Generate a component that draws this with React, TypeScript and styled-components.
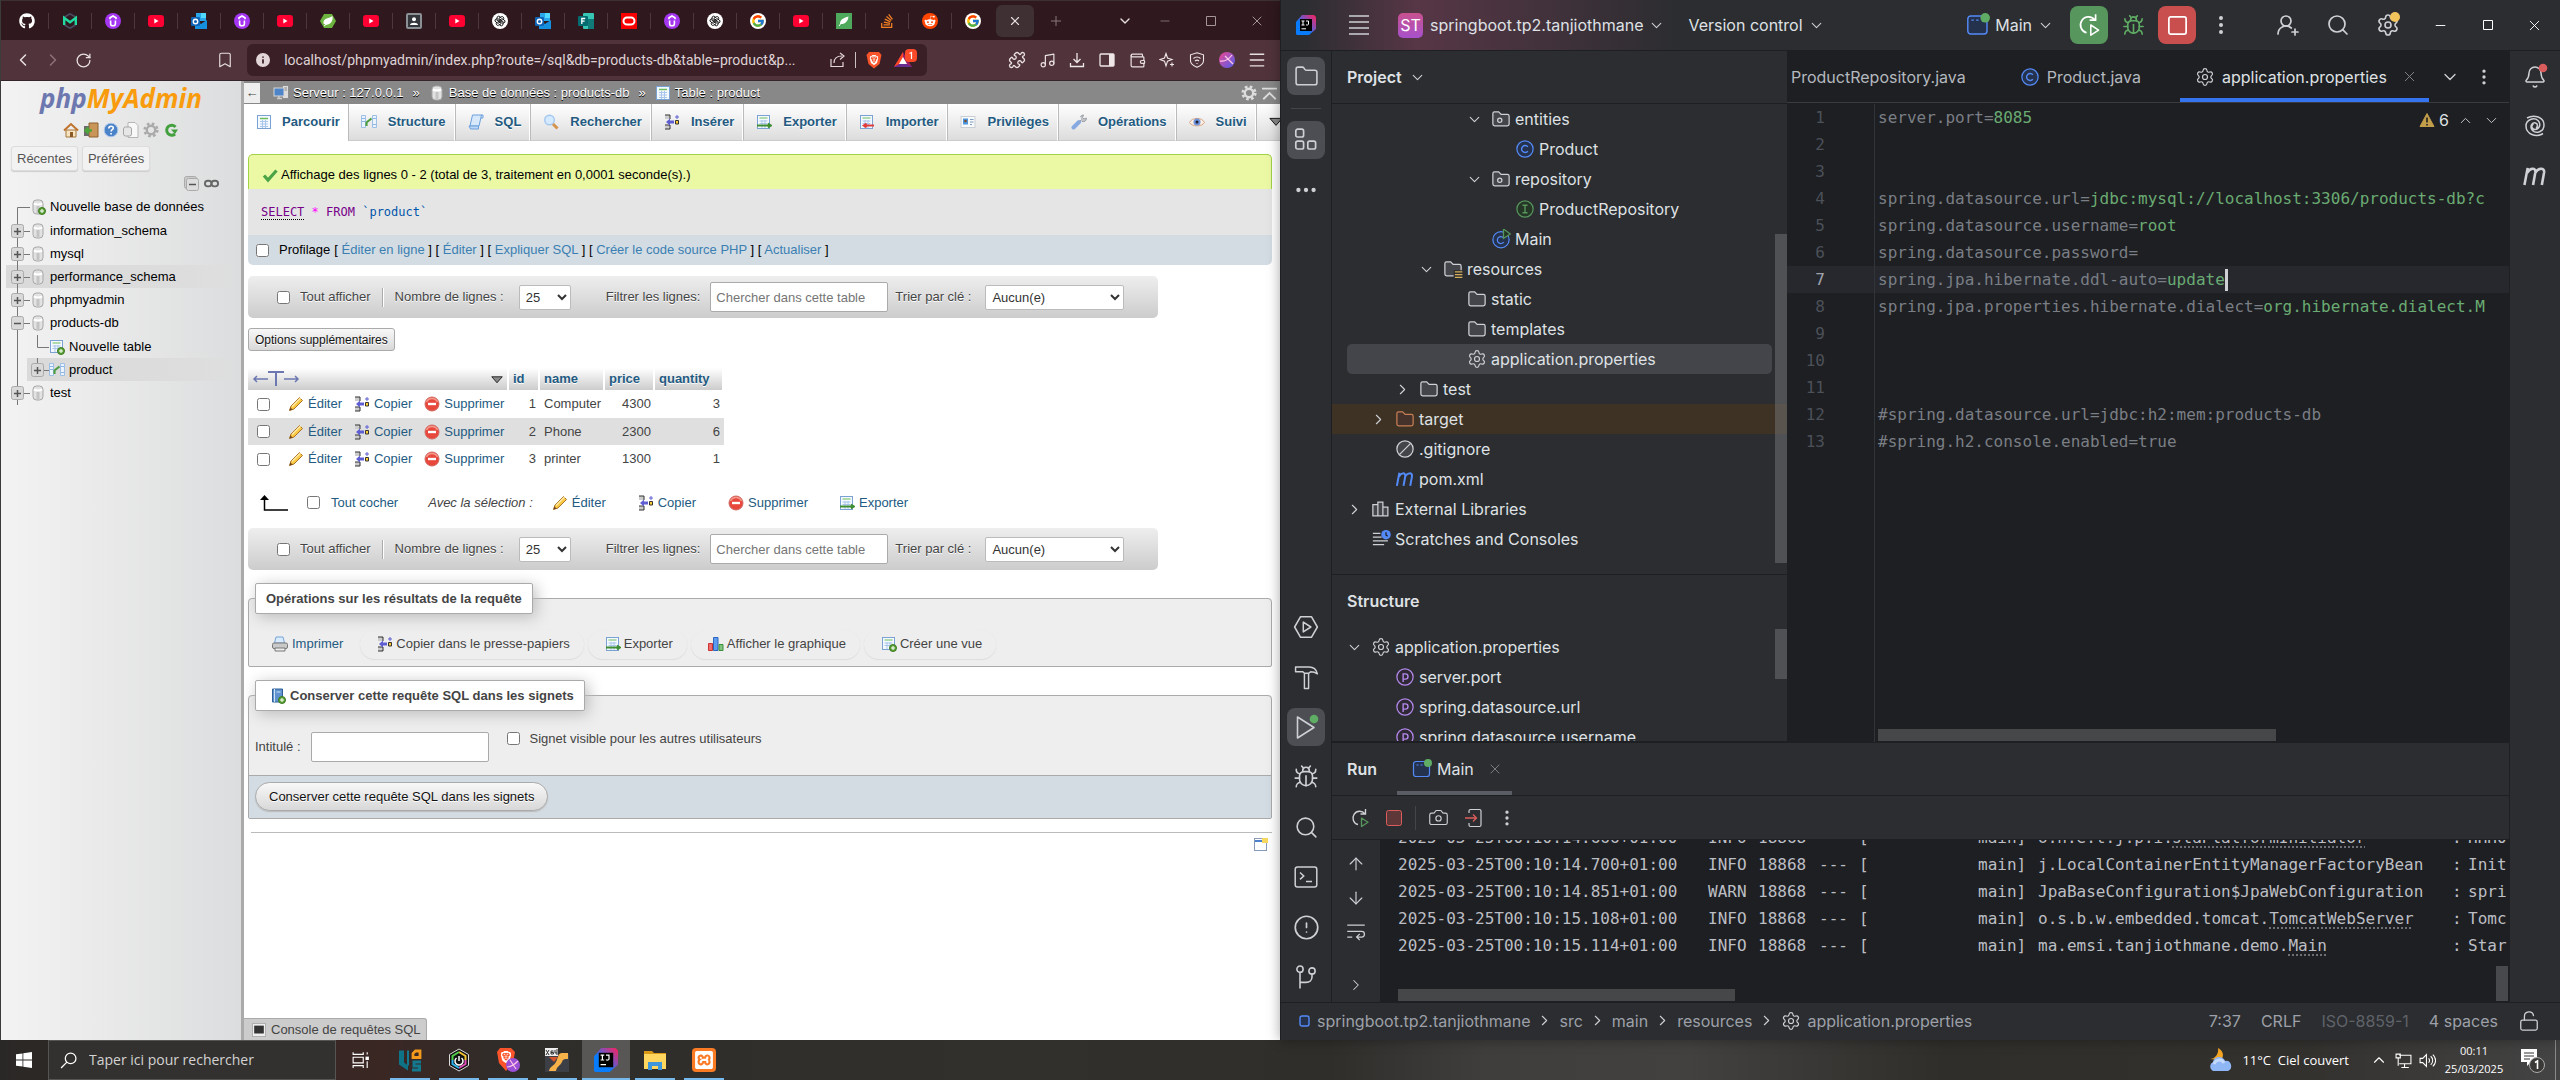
import React from "react";
import styled, { createGlobalStyle, css } from "styled-components";
import {
  ArrowDown, ArrowUp, Bell, Bookmark, Bug, Camera, ChevronDown, ChevronLeft, ChevronRight, ChevronUp,
  CircleAlert, EllipsisVertical, Ellipsis, Folder, LockOpen, Menu, Minus, Music, Plus, Puzzle,
  RotateCw, Search, Settings, Square, UserRoundPlus, Wallet, X,
} from "lucide-react";
import { FaGithub, FaRedditAlien, FaStackOverflow } from "react-icons/fa";
import { FcGoogle } from "react-icons/fc";
import { SiBrave, SiXampp } from "react-icons/si";
import { TbBrandOpenai } from "react-icons/tb";

const Global = createGlobalStyle`
  * { box-sizing: border-box; }
  body { margin: 0; overflow: hidden; }
  button, input, select { font: inherit; color: inherit; }
  button { background: none; border: 0; padding: 0; margin: 0; }
  ul { list-style: none; margin: 0; padding: 0; }
  a { text-decoration: none; color: inherit; }
  svg { flex: none; display: block; }
`;

const ARIAL = '"Liberation Sans", Arial, sans-serif';
const INTER = 'Inter, sans-serif';
const MONO = '"DejaVu Sans Mono", monospace';
const SEGOE = '"Open Sans", "Noto Sans", sans-serif';

const Desktop = styled.div`
  display: flex;
  flex-direction: column;
  height: 100vh;
  background: #2d2b29;
`;
const Windows = styled.div`
  display: grid;
  grid-template-columns: minmax(0, 1fr) minmax(0, 1fr);
  flex: 1;
  min-height: 0;
`;

/* ---------- small drawings ---------- */

const Art = ({ w = 16, h, v = "0 0 16 16", children }: { w?: number; h?: number; v?: string; children: React.ReactNode }) => (
  <svg width={w} height={h ?? w} viewBox={v} fill="none" aria-hidden="true">{children}</svg>
);

const Udemy = () => (
  <Art><circle cx="8" cy="8" r="8" fill="#a435f0" /><path d="M5 6.2V4.8L8 3l3 1.8v1.4M5.6 7.4v3a2.4 2.4 0 0 0 4.8 0v-3" stroke="#fff" strokeWidth="1.6" /></Art>
);
const Mail = () => (
  <Art><path d="M2.5 4L8 .8 13.5 4M2.5 12L8 15.2 13.5 12" stroke="#4b4d63" strokeWidth="1.5" /><path d="M2.2 12V4.800L8 9.200l5.800-4.400V12" stroke="#22d9a0" strokeWidth="2.4" /></Art>
);
const Outlook = () => (
  <Art><path d="M5 0h10v8H5z" fill="#28a8ea" /><path d="M10 0h5v5h-5z" fill="#50d9ff" /><path d="M4 7l6 4 6-4v9H4z" fill="#1490df" /><rect y="4" width="9" height="9" rx="1" fill="#0f64b5" /><circle cx="4.5" cy="8.5" r="2.2" stroke="#fff" strokeWidth="1.4" /></Art>
);
const Tube = () => (
  <Art><rect y="2" width="16" height="12" rx="3" fill="#ff0033" /><path d="M6.3 5.5v5L10.5 8z" fill="#fff" /></Art>
);
const Leaf = () => (
  <Art><path d="M4 1h8l4 7-4 7H4L0 8z" fill="#6db33f" /><path d="M3.5 10.5C3 5 8 6 12.5 3c1 6-3 9.500-7.500 8.500" fill="#fff" /><path d="M4 13l5-4" stroke="#fff" /></Art>
);
const Contact = () => (
  <Art><rect x="1" y="1" width="14" height="14" rx="1" stroke="#8b9095" strokeWidth="2" fill="#33363b" /><circle cx="8" cy="6.2" r="2" fill="#fff" /><path d="M4 12c0-3 8-3 8 0z" fill="#fff" /></Art>
);
const Forms = () => (
  <Art><rect x="5" width="11" height="16" rx="1" fill="#37c6b4" /><rect x="10" y="6" width="6" height="10" fill="#0f7a78" /><rect y="3" width="10" height="10" rx="1" fill="#036c70" /><path d="M3.8 11V5.500h3.400M3.8 8.200h2.800" stroke="#fff" strokeWidth="1.3" /></Art>
);
const Oracle = () => (
  <Art><rect width="16" height="16" fill="#f80000" /><rect x="2.5" y="4.5" width="11" height="7" rx="3.5" stroke="#fff" strokeWidth="2" /></Art>
);
const Gpt = () => (
  <Art><circle cx="8" cy="8" r="8" fill="#fff" /><TbBrandOpenai x={2} y={2} size={12} color="#111" /></Art>
);
const Google = () => (
  <Art><circle cx="8" cy="8" r="8" fill="#fff" /><FcGoogle x={1} y={1} size={14} /></Art>
);
const Thyme = () => (
  <Art><rect width="16" height="16" fill="#4fa95c" /><path d="M4 11C4 6 8 5 12.5 3.500 12 8 9.500 11.500 4 11z" fill="#fff" /><path d="M3 13l3-4" stroke="#fff" /></Art>
);
const Reddit = () => (
  <Art><circle cx="8" cy="8" r="8" fill="#ff4500" /><FaRedditAlien x={2} y={2} size={12} color="#fff" /></Art>
);

const Idea = ({ s }: { s: number }) => (
  <Art w={s} v="0 0 20 20">
    <defs><linearGradient id={`ij${s}`} x1="1" y1="0" x2="0" y2="1"><stop offset="0" stopColor="#ff1f5a" /><stop offset=".45" stopColor="#6b57c9" /><stop offset=".6" stopColor="#087cfa" /></linearGradient></defs>
    <path d="M0 7l6-7h12l2 2v12l-7 6H1l-1-1z" fill={`url(#ij${s})`} />
    <rect x="4" y="4" width="12" height="12" fill="#000" />
    <path d="M5.500 6h3M7 6v4M5.500 10h3M10 6h2.500v3.200c0 .8-1.600 1.200-2.500.5M5.500 13.800h4.500" stroke="#fff" strokeWidth="1" />
  </Art>
);

/* phpMyAdmin icon set */
const PTable = () => (
  <Art><rect x="1.5" y="1.5" width="13" height="13" fill="#f4f9ff" stroke="#7aa3d4" /><path d="M4 4.500h8" stroke="#6cbd5b" strokeWidth="1.5" /><path d="M4 7.500h8M4 10h8M4 12.500h8M6.500 6v8M9.500 6v8" stroke="#a9c6ea" /></Art>
);
const PStruct = () => (
  <Art><path d="M.5 1.500h4v12h-4zM11.500 1.500h4v12h-4z" fill="#eaf3ff" stroke="#9dbfe6" /><path d="M1 4.500h3M1 7.500h3M12 4.500h3M12 10.500h3" stroke="#8fb6e3" /><path d="M5.500 12V8.500l5-4" stroke="#4f9d44" strokeWidth="2.2" /></Art>
);
const PSql = () => (
  <Art><path d="M4.500 1h9l-2.500 11H2z" fill="#d7e8fb" stroke="#6a9fdc" /><path d="M1 12h9.500v3H2.500z" fill="#bcd6f5" stroke="#6a9fdc" /><path d="M13 1h2v3h-2" stroke="#6a9fdc" /></Art>
);
const PSearch = () => (
  <Art><circle cx="6.5" cy="6" r="4.8" fill="#d5e9ff" stroke="#a3c8f0" strokeWidth="1.4" /><path d="M10 10l4.500 4.500" stroke="#d3924e" strokeWidth="3" /></Art>
);
const PInsert = () => (
  <Art><path d="M1 1h5v4H1zM1 11h5v4H1z" fill="#ccc" /><path d="M1 1h5v4M1 11h5v4H1" stroke="#333" /><path d="M2 8l4-3.500v2h4v3H6v2z" fill="#5f5fd3" /><path d="M11.500 6.500h3v3.500h-3z" fill="#fc3" stroke="#333" /><path d="M13 1v4M11 3h4" stroke="#5f5fd3" /></Art>
);
const PExport = ({ c = "#3f8e34", flip = false }: { c?: string; flip?: boolean }) => (
  <Art><rect x="1.5" y="1.5" width="12" height="13" fill="#f4f9ff" stroke="#7aa3d4" /><path d="M3.500 4h8" stroke="#6cbd5b" /><path d="M3.500 7h8M3.500 9.500h8M6 6v8M9 6v8" stroke="#a9c6ea" />{flip ? <path d="M15 11.500H5M7.500 9.500l-3 2 3 2" stroke={c} strokeWidth="1.8" /> : <path d="M1 11.500h13M12 9.500l3 2-3 2" stroke={c} strokeWidth="1.8" />}</Art>
);
const PPriv = () => (
  <Art><rect x="1" y="2.5" width="14" height="11" fill="#f7f9fb" stroke="#c9ced3" /><rect x="3" y="4.5" width="5" height="6" fill="#4d96df" /><circle cx="5.5" cy="7" r="1.3" fill="#7a4b25" /><path d="M10 5.500h3.500M10 8h3.500M10 10.500h2" stroke="#7d9cc0" /></Art>
);
const PWrench = () => (
  <Art><path d="M2.500 13.500L8 8" stroke="#86a9e2" strokeWidth="4" strokeLinecap="round" /><path d="M8 8l2.500-2.500M9.500 3a3 3 0 0 1 3-2l-1 2.500 1.500 1.500 2.300-1a3 3 0 0 1-4.800 3" fill="#c3c7cc" stroke="#9a9fa5" /></Art>
);
const PEye = () => (
  <Art><path d="M.5 8.500C3 3 13 3 15.500 8.500 13 13 3 13 .5 8.500z" fill="#fbeee4" stroke="#d7a483" /><circle cx="8" cy="8" r="3.5" fill="#6d94dc" /><circle cx="8" cy="8" r="1.5" fill="#223" /></Art>
);
const PPencil = () => (
  <Art><path d="M1.500 14.500L3 10l8.500-8.500 3 3L6 13z" fill="#f9c944" stroke="#a9702a" /><path d="M4 10.500L12.500 2" stroke="#fdeaa9" strokeWidth="1.4" /><path d="M1.500 14.500l1-3 2 2z" fill="#6b4218" /></Art>
);
const PDelete = () => (
  <Art><circle cx="8" cy="8" r="7" fill="#e8483b" stroke="#cf6a62" /><path d="M2.500 6a6 6 0 0 1 11 0" stroke="#f59a8f" strokeWidth="1.5" /><path d="M4 8h8" stroke="#fff" strokeWidth="2.4" /></Art>
);
const PDb = ({ plus = false }: { plus?: boolean }) => (
  <Art><rect x="3" y="1" width="10" height="14" rx="3.5" fill="#e2e2e2" stroke="#a6a6a6" /><path d="M4 4.500c2 1 6 1 8 0" stroke="#fff" strokeWidth="2" /><path d="M8 7v7" stroke="#c4c4c4" strokeWidth="3" />{plus && <><circle cx="12" cy="12" r="3.5" fill="#5ca138" stroke="#3c7a20" /><path d="M12 10v4M10 12h4" stroke="#fff" /></>}</Art>
);
const PNewTable = () => (
  <Art><rect x="1.5" y="1.5" width="12" height="12" fill="#f4f9ff" stroke="#7aa3d4" /><path d="M3.500 4h8" stroke="#6cbd5b" /><path d="M3.500 7h8M3.500 9.500h8M6 6v7M9 6v7" stroke="#a9c6ea" /><circle cx="12" cy="12" r="3.5" fill="#5ca138" stroke="#3c7a20" /><path d="M12 10v4M10 12h4" stroke="#fff" /></Art>
);
const PServer = () => (
  <Art><rect x="9.5" y=".5" width="6" height="13" fill="#dcdcdc" stroke="#8c8c8c" /><path d="M11 3h3M11 5h3" stroke="#888" /><rect x="1" y="3" width="10" height="8" fill="#4e84c8" stroke="#d6d6d6" /><path d="M4 13.500h5M6 11v2" stroke="#ccc" strokeWidth="1.5" /></Art>
);
const PGear = ({ c = "#aaa", s = 16 }: { c?: string; s?: number }) => (
  <Art w={s}><circle cx="8" cy="8" r="6.3" stroke={c} strokeWidth="2.6" strokeDasharray="2.6 2.35" /><circle cx="8" cy="8" r="4.2" stroke={c} strokeWidth="2.4" /></Art>
);
const PCheck = () => (
  <Art><path d="M2 8.500L6 13l8.500-9.500" stroke="#4ba446" strokeWidth="3.2" /></Art>
);
const PPrint = () => (
  <Art><path d="M4 1h7l1.500 6h-10z" fill="#d9ebff" stroke="#79a5d8" /><rect x=".5" y="7" width="15" height="5.5" rx="1.5" fill="#c9c9c9" stroke="#777" /><path d="M3 12h10v3H3z" fill="#eee" stroke="#777" /></Art>
);
const PChart = () => (
  <Art><path d="M.5 7.500h4v7h-4z" fill="#ef6a6a" stroke="#c33" /><path d="M5.500 1.500h4.500v13H5.500z" fill="#5d9cf0" stroke="#2a67bd" /><path d="M11 8.500h4v6h-4z" fill="#7fc47f" stroke="#3c8f3c" /></Art>
);
const PBook = () => (
  <Art><path d="M2.500 1h10v13h-10z" fill="#5f93cf" stroke="#2e6097" /><path d="M4.500 1v13M6.500 4h4" stroke="#cfe2f7" /><circle cx="12" cy="12" r="3.5" fill="#5ca138" stroke="#3c7a20" /><path d="M12 10v4M10 12h4" stroke="#fff" /></Art>
);
const PHome = () => (
  <Art><path d="M3 8h10v7H3z" fill="#f7e3c0" stroke="#a5773b" /><path d="M1 8.500L8 2l7 6.500" stroke="#c0722b" strokeWidth="2" /><path d="M7 10h3v5H7z" fill="#8a5a26" /></Art>
);
const PExit = () => (
  <Art><path d="M6 1h9v14H6z" fill="#c99559" stroke="#8d6230" /><path d="M1 4h5v10H1z" fill="#6b6b6b" /><path d="M9 8.500H3M5.500 5.500l-3 3 3 3" stroke="#4ea53c" strokeWidth="2.4" /></Art>
);
const PHelp = () => (
  <Art><circle cx="8" cy="8" r="6.8" fill="#4b83c9" stroke="#a9c6ea" /><path d="M5.800 6.500c0-3 4.500-3 4.500-.4 0 1.600-2.200 1.700-2.200 3.400M8.100 11v1.500" stroke="#fff" strokeWidth="1.6" /></Art>
);
const PDocs = () => (
  <Art><path d="M5 .5h7l3 3v12H5z" fill="#f8f8f8" stroke="#b5b5b5" /><rect x=".5" y="5" width="8" height="9" rx="2" fill="#e6e6e6" stroke="#a6a6a6" /></Art>
);
const PReload = () => (
  <Art><path d="M12.500 5A5 5 0 1 0 12 12" stroke="#43a03f" strokeWidth="3" /><path d="M8 7.500h7L12 12z" fill="#43a03f" /></Art>
);

/* ---------- browser ---------- */

const Browser = styled.section`
  display: flex;
  flex-direction: column;
  min-width: 0;
  border-left: 1px solid #3b3b3b;
  background: #fff;
  font: 13px/16px ${ARIAL};
  color: #444;
  overflow: hidden;
`;
const TabStrip = styled.div`
  display: flex;
  align-items: center;
  flex: none;
  height: 40px;
  padding-left: 5px;
  background: #2f191f;
  border-top: 1px solid #3c3034;
  color: #e9e0e2;
`;
const FavTab = styled.button`
  display: flex;
  justify-content: center;
  align-items: center;
  width: 43px;
  height: 16px;
  border-right: 1px solid #4c383d;
  &:nth-child(23) { border-right-color: transparent; }
`;
const ActiveTab = styled.button`
  display: flex;
  align-items: center;
  justify-content: center;
  width: 38px;
  height: 32px;
  margin-left: 1px;
  border-radius: 6px;
  background: #3f3034;
`;
const StripButton = styled.button<{ $w: number; $c?: string }>`
  display: flex;
  align-items: center;
  justify-content: center;
  width: ${(p) => p.$w}px;
  height: 32px;
  color: ${(p) => p.$c ?? "#e9e0e2"};
`;
const Spacer = styled.span<{ $n?: number }>`flex: ${(p) => p.$n ?? 1};`;
const NavBar = styled.div`
  display: flex;
  align-items: center;
  flex: none;
  height: 41px;
  background: #51343b;
  border-bottom: 1px solid #35242a;
  padding: 0 8px 0 7px;
  color: #efe6e8;
`;
const UrlBox = styled.label`
  display: flex;
  align-items: center;
  gap: 14px;
  width: 680px;
  height: 32px;
  padding: 0 7px 0 9px;
  border-radius: 6px;
  background: #3a1f26;
  margin-left: 7px;
`;
const Url = styled.input`
  flex: 1;
  min-width: 0;
  border: 0;
  background: none;
  color: #ded2d5;
  font: 14px/20px Roboto, sans-serif;
  padding: 0;
  outline: 0;
`;
const UrlIcons = styled.span`
  display: flex;
  align-items: center;
  gap: 9px;
`;
const UrlRule = styled.i`
  width: 1px;
  height: 16px;
  background: #cabfc2;
`;

const Page = styled.div`
  display: flex;
  flex: 1;
  min-height: 0;
`;
const Side = styled.nav`
  width: 243px;
  flex: none;
  border-right: 3px solid #aaa;
  background: linear-gradient(90deg, #f3f3f3, #dcddde);
  color: #000;
`;
const Logo = styled.div`
  font: italic 700 26px/34px ${SEGOE};
  text-align: center;
  color: #6c78af;
  height: 39px;
  span { color: #f89c0e; }
`;
const SideIcons = styled.div`
  display: flex;
  justify-content: center;
  gap: 4px;
  height: 20px;
  align-items: center;
`;
const SideButtons = styled.div`
  display: flex;
  gap: 4px;
  padding: 6px 10px 0;
`;
const SideButton = styled.button`
  height: 25px;
  padding: 0 5px;
  border: 1px solid #ddd;
  border-radius: 3px;
  background: #f2f2f2;
  color: #555;
  box-shadow: 0 1px 1px #ccc;
`;
const SideTools = styled.div`
  display: flex;
  justify-content: flex-end;
  align-items: center;
  gap: 5px;
  height: 24px;
  padding-right: 22px;
`;
const SideRow = styled.li<{ $hot?: boolean; $h?: number }>`
  display: flex;
  align-items: center;
  height: ${(p) => p.$h ?? 23}px;
  margin-left: 5px;
  white-space: nowrap;
  & > div {
    display: flex;
    align-items: center;
    flex: 1;
    height: 100%;
    background: ${(p) => (p.$hot ? "linear-gradient(90deg, #dadada, #dddddd 80%, transparent)" : "none")};
  }
  a { margin-left: 4px; }
`;
const Joint = ({ kind, inner = false }: { kind: "new" | "plus" | "minus"; inner?: boolean }) => (
  <svg width={inner ? 22 : 24} height="24" viewBox={inner ? "1 0 22 24" : "0 0 24 24"} fill="none" stroke="#777">
    {kind === "new" ? <path d={inner ? "M11.5 0V12.500H24" : "M11.5 24V12.500H24"} /> : (
      <>
        {inner ? <path d="M11.5 0v12" /> : <path d="M11.5 0v24" />}
        <path d="M17 12.500h7" />
        <rect x="5.500" y="5.500" width="12" height="13" rx="2" fill="#d9d9d9" stroke="#aaa" />
        <path d={kind === "plus" ? "M8 12.500h7M11.500 9v7" : "M8 12.500h7"} stroke="#555" strokeWidth="1.500" />
      </>
    )}
  </svg>
);
const Trunk = () => <svg width="21" height="24" fill="none" stroke="#777"><path d="M11.500 0v24" /></svg>;

const Main = styled.main`
  display: flex;
  flex-direction: column;
  flex: 1;
  min-width: 0;
`;
const Crumbs = styled.div`
  display: flex;
  align-items: center;
  flex: none;
  height: 23px;
  padding-right: 3px;
  background: #888;
  color: #fff;
  text-shadow: 0 1px 0 #000;
  white-space: nowrap;
`;
const BackBox = styled.button`
  width: 16px;
  height: 20px;
  margin-right: 13px;
  background: #eee;
  color: #444;
  text-shadow: none;
`;
const Crumb = styled.a`
  display: flex;
  align-items: center;
  gap: 4px;
`;
const Raquo = styled.span`padding: 0 9px;`;
const Tabs = styled.div`
  display: flex;
  flex: none;
  height: 37px;
  overflow: hidden;
`;
const Tab = styled.a<{ $on?: boolean }>`
  display: flex;
  flex: none;
  gap: 11px;
  padding: 10px 8px 0 12px;
  font-weight: 700;
  color: #235a81;
  text-shadow: 0 1px 0 #fff;
  border-right: 1px solid #fff;
  ${(p) => p.$on
    ? css`background: #fff; padding-right: 7px; gap: 10px;`
    : css`background: linear-gradient(#fff, #dcdcdc); border-left: 1px solid #bbb; border-bottom: 1px solid #ccc;`}
`;
const Body = styled.div`
  flex: 1;
  padding: 13px 8px 0 4px;
  min-height: 0;
`;
const Notice = styled.div`
  display: flex;
  align-items: center;
  gap: 3px;
  height: 35px;
  padding: 5px 13px 0;
  border: 1px solid #a2d246;
  border-bottom: 0;
  border-radius: 5px 5px 0 0;
  background: #ebf8a4;
  color: #000;
`;
const SqlText = styled.div`
  height: 46px;
  padding: 14px 13px;
  background: #e5e5e5;
  font: 12px/18px ${MONO};
  color: #770088;
  i { font-style: normal; color: #ff00ff; }
  b { font-weight: 400; color: #0055aa; }
  u { text-decoration: none; border-bottom: 1px dotted #000; }
`;
const ProfileBar = styled.div`
  display: flex;
  align-items: center;
  gap: 4px;
  height: 30px;
  padding-left: 8px;
  border-radius: 0 0 5px 5px;
  background: #d3dce3;
  color: #000;
  label { display: flex; gap: 10px; align-items: center; }
  a { color: #3b7fb2; }
`;
const Check = styled.input.attrs({ type: "checkbox" })`
  width: 13px;
  height: 13px;
  margin: 0;
`;
const OptionBar = styled.form<{ $top: number }>`
  display: flex;
  align-items: center;
  width: 910px;
  height: 42px;
  margin-top: ${(p) => p.$top}px;
  padding-left: 29px;
  border-radius: 5px;
  background: linear-gradient(#eee, #ccc);
  text-shadow: 0 1px 0 #fff;
  white-space: nowrap;
  label { display: flex; align-items: center; gap: 10px; }
`;
const BarRule = styled.i`
  width: 2px;
  height: 19px;
  margin: 0 11px;
  border-left: 1px solid #aaa;
  background: #fff;
`;
const PickRows = styled.label`&& { gap: 15px; margin-right: 35px; }`;
const PickKey = styled.label`&& { gap: 14px; margin-left: 7px; }`;
const Pick = styled.select<{ $w: number }>`
  width: ${(p) => p.$w}px;
  height: 25px;
  padding: 0 2px;
  border: 1px solid #bbb;
  border-radius: 2px;
  background: #fff;
  color: #333;
`;
const Field = styled.input`
  width: 178px;
  height: 30px;
  padding: 0 5px;
  border: 1px solid #aaa;
  border-radius: 2px;
  background: #fff;
`;
const GreyButton = styled.button<{ $round?: boolean }>`
  border: 1px solid #aaa;
  background: linear-gradient(#f8f8f8, #d8d8d8);
  color: #111;
  text-shadow: 0 1px 0 #fff;
  ${(p) => p.$round
    ? css`height: 29px; padding: 0 13px; border-radius: 15px; box-shadow: 0 1px 1px #bbb;`
    : css`display: block; height: 23px; margin-top: 10px; padding: 0 6px; border-radius: 3px; font-size: 12px;`}
`;
const Grid = styled.table`
  margin-top: 17px;
  border-collapse: separate;
  border-spacing: 0;
  table-layout: fixed;
  width: 476px;
  th, td { padding: 0 4px; text-align: left; white-space: nowrap; }
  th {
    height: 22px;
    border-right: 2px solid #fff;
    background: linear-gradient(#fff, #ccc);
    color: #235a81;
    text-shadow: 0 1px 0 #fff;
  }
  td.num { text-align: right; }
  tbody tr { height: 28px; }
  tbody tr:nth-child(even) { height: 27px; background: #dfdfdf; }
`;
const HeadTools = styled.div`
  display: flex;
  align-items: center;
  justify-content: space-between;
`;
const Acts = styled.div`
  display: flex;
  align-items: center;
  padding-left: 5px;
`;
const Act = styled.a<{ $ml: number }>`
  display: flex;
  align-items: center;
  gap: 4px;
  margin-left: ${(p) => p.$ml}px;
  color: #235a81;
`;
const CheckAll = styled.div`
  display: flex;
  align-items: center;
  height: 55px;
  padding: 4px 0 0 11px;
  label { display: flex; align-items: center; gap: 11px; margin: 0 30px 0 18px; color: #235a81; }
`;
const Box = styled.fieldset`
  margin: 13px 0 0;
  padding: 0;
  min-width: 0;
  border: 1px solid #aaa;
  border-radius: 4px 4px 2px 2px;
  background: #eee;
`;
const Legend = styled.legend`
  display: flex;
  align-items: center;
  gap: 4px;
  height: 31px;
  margin-left: 6px;
  padding: 0 10px;
  border: 1px solid #aaa;
  border-radius: 2px;
  background: #fff;
  box-shadow: 3px 3px 15px #bbb;
  font-weight: 700;
`;
const OpRow = styled.div`
  display: flex;
  align-items: center;
  height: 52px;
  padding: 8px 0 0 5px;
`;
const Pill = styled.button`
  display: flex;
  align-items: center;
  gap: 3px;
  height: 29px;
  margin-left: 4px;
  padding: 0 14px 0 17px;
  border-radius: 15px;
  box-shadow: 0 1px 1px #ddd, 0 0 1px #e4e4e4;
`;
const Print = styled.a`
  display: flex;
  align-items: center;
  gap: 4px;
  padding: 0 13px 0 18px;
  color: #235a81;
`;
const MarkRow = styled.div`
  display: flex;
  align-items: flex-start;
  height: 64px;
  padding: 21px 0 0 6px;
  label { display: flex; align-items: center; gap: 10px; }
  label:last-child { height: 13px; margin-left: 18px; }
`;
const MarkFoot = styled.div`
  height: 43px;
  padding: 6px;
  border-top: 1px solid #aaa;
  background: #d3dce3;
`;
const Rule = styled.hr`
  height: 1px;
  margin: 13px 0 0 3px;
  border: 0;
  background: #bbb;
`;
const FootIcon = styled.a`
  display: flex;
  justify-content: flex-end;
  padding: 3px 3px 0;
`;
const ConsoleTab = styled.button`
  display: flex;
  align-items: center;
  align-self: flex-start;
  gap: 5px;
  height: 22px;
  padding: 0 5px 0 8px;
  border: 1px solid #aaa;
  border-width: 1px 1px 0 0;
  border-radius: 0 3px 0 0;
  background: #ccc;
  color: #444;
`;

const favs = [
  <FaGithub size={16} color="#fff" />, <Mail />, <Udemy />, <Tube />, <Outlook />, <Udemy />, <Tube />, <Leaf />, <Tube />, <Contact />,
  <Tube />, <Gpt />, <Outlook />, <Forms />, <Oracle />, <Udemy />, <Gpt />, <Google />, <Tube />, <Thyme />,
  <FaStackOverflow size={16} color="#f48024" />, <Reddit />, <Google />,
];

const RowOptions = ({ id, top }: { id: string; top: number }) => (
  <OptionBar $top={top}>
    <label><Check name={`all-${id}`} />Tout afficher</label>
    <BarRule />
    <PickRows>Nombre de lignes :<Pick $w={52} defaultValue="25"><option>25</option><option>50</option></Pick></PickRows>
    <label>Filtrer les lignes:<Field placeholder="Chercher dans cette table" /></label>
    <PickKey>Trier par clé :<Pick $w={139}><option>Aucun(e)</option></Pick></PickKey>
  </OptionBar>
);

const records = [
  { id: 1, name: "Computer", price: 4300, quantity: 3 },
  { id: 2, name: "Phone", price: 2300, quantity: 6 },
  { id: 3, name: "printer", price: 1300, quantity: 1 },
];

const dbRows = ["information_schema", "mysql", "performance_schema", "phpmyadmin"];

const Sidebar = () => (
  <Side>
    <Logo>php<span>MyAdmin</span></Logo>
    <SideIcons><PHome /><PExit /><PHelp /><PDocs /><PGear /><PReload /></SideIcons>
    <SideButtons><SideButton>Récentes</SideButton><SideButton>Préférées</SideButton></SideButtons>
    <SideTools>
      <Art><rect x="1.5" y="1.5" width="12" height="12" rx="2" fill="#ccc" stroke="#aaa" /><rect x="3.5" y="3.5" width="12" height="12" rx="2" fill="#ddd" stroke="#aaa" /><path d="M6 9.500h7" stroke="#555" strokeWidth="1.5" /></Art>
      <Art w={15}><rect x="1" y="5" width="7" height="6" rx="3" stroke="#666" strokeWidth="2" /><rect x="8" y="5" width="7" height="6" rx="3" stroke="#666" strokeWidth="2" /></Art>
    </SideTools>
    <ul>
      <SideRow $h={24}><div><Joint kind="new" /><PDb plus /><a href="#new">Nouvelle base de données</a></div></SideRow>
      {dbRows.map((n) => (
        <SideRow key={n} $hot={n === "performance_schema"}><div><Joint kind="plus" /><PDb /><a href={`#${n}`}>{n}</a></div></SideRow>
      ))}
      <SideRow $h={24}><div><Joint kind="minus" /><PDb /><a href="#products-db">products-db</a></div></SideRow>
      <SideRow><Trunk /><div><Joint kind="new" inner /><PNewTable /><a href="#newtable">Nouvelle table</a></div></SideRow>
      <SideRow $hot><Trunk /><div><Joint kind="plus" inner /><PStruct /><a href="#product">product</a></div></SideRow>
      <SideRow $h={24}><div><Joint kind="plus" /><PDb /><a href="#test">test</a></div></SideRow>
    </ul>
  </Side>
);

const PmaMain = () => (
  <Main>
    <Crumbs>
      <BackBox>←</BackBox>
      <Crumb href="#server"><PServer />Serveur : 127.0.0.1</Crumb><Raquo>»</Raquo>
      <Crumb href="#db"><PDb />Base de données : products-db</Crumb><Raquo>»</Raquo>
      <Crumb href="#table"><PTable />Table : product</Crumb>
      <Spacer />
      <PGear c="#ddd" />
      <Art v="-6 0 16 16" w={20}><path d="M-2 4.500h12M-1 13l5-5 5 5" stroke="#ddd" strokeWidth="1.5" /></Art>
    </Crumbs>
    <Tabs>
      <Tab href="#browse" $on><PTable />Parcourir</Tab>
      <Tab href="#structure"><PStruct />Structure</Tab>
      <Tab href="#sql"><PSql />SQL</Tab>
      <Tab href="#search"><PSearch />Rechercher</Tab>
      <Tab href="#insert"><PInsert />Insérer</Tab>
      <Tab href="#export"><PExport />Exporter</Tab>
      <Tab href="#import"><PExport c="#e03c3c" flip />Importer</Tab>
      <Tab href="#priv"><PPriv />Privilèges</Tab>
      <Tab href="#ops"><PWrench />Opérations</Tab>
      <Tab href="#track"><PEye />Suivi</Tab>
      <Tab href="#more" aria-label="Plus"><Art w={14}><path d="M1 5h14L8 13z" fill="#888" stroke="#000" /></Art></Tab>
    </Tabs>
    <Body>
      <Notice><PCheck />Affichage des lignes 0 - 2 (total de 3, traitement en 0,0001 seconde(s).)</Notice>
      <SqlText><u>SELECT</u> <i>*</i> FROM <b>`product`</b></SqlText>
      <ProfileBar>
        <label><Check name="profiling" />Profilage</label>
        <span>[ <a href="#inline">Éditer en ligne</a> ] [ <a href="#edit">Éditer</a> ] [ <a href="#explain">Expliquer SQL</a> ] [ <a href="#php">Créer le code source PHP</a> ] [ <a href="#refresh">Actualiser</a> ]</span>
      </ProfileBar>
      <RowOptions id="top" top={11} />
      <GreyButton>Options supplémentaires</GreyButton>
      <Grid>
        <colgroup><col width="261" /><col width="31" /><col width="65" /><col width="50" /><col width="69" /></colgroup>
        <thead>
          <tr>
            <th>
              <HeadTools>
                <Art w={48} h={18} v="0 0 48 18"><path d="M2 9h14M32 9h14M5 6L2 9l3 3M43 6l3 3-3 3" stroke="#6c78af" strokeWidth="1.5" /><path d="M16 2h16M24 2v14" stroke="#6c78af" strokeWidth="2" /></Art>
                <Art w={12}><path d="M1 5h14L8 13z" fill="#888" stroke="#000" /></Art>
              </HeadTools>
            </th>
            <th>id</th><th>name</th><th>price</th><th>quantity</th>
          </tr>
        </thead>
        <tbody>
          {records.map((r) => (
            <tr key={r.id}>
              <td>
                <Acts>
                  <Check aria-label={`Ligne ${r.id}`} />
                  <Act href="#edit" $ml={18}><PPencil />Éditer</Act>
                  <Act href="#copy" $ml={12}><PInsert />Copier</Act>
                  <Act href="#drop" $ml={12}><PDelete />Supprimer</Act>
                </Acts>
              </td>
              <td className="num">{r.id}</td><td>{r.name}</td><td className="num">{r.price}</td><td className="num">{r.quantity}</td>
            </tr>
          ))}
        </tbody>
      </Grid>
      <CheckAll>
        <Art w={30} h={18} v="0 0 30 18"><path d="M5.500 3v13H29" stroke="#000" strokeWidth="1.5" /><path d="M1 6l4.500-5L10 6z" fill="#000" /></Art>
        <label><Check name="checkall" />Tout cocher</label>
        <em>Avec la sélection :</em>
        <Act href="#edit" $ml={19}><PPencil />Éditer</Act>
        <Act href="#copy" $ml={32}><PInsert />Copier</Act>
        <Act href="#drop" $ml={32}><PDelete />Supprimer</Act>
        <Act href="#export" $ml={31}><PExport />Exporter</Act>
      </CheckAll>
      <RowOptions id="bottom" top={0} />
      <Box>
        <Legend>Opérations sur les résultats de la requête</Legend>
        <OpRow>
          <Print href="#print"><PPrint />Imprimer</Print>
          <Pill><PInsert />Copier dans le presse-papiers</Pill>
          <Pill><PExport />Exporter</Pill>
          <Pill><PChart />Afficher le graphique</Pill>
          <Pill><PNewTable />Créer une vue</Pill>
        </OpRow>
      </Box>
      <Box>
        <Legend><Spacer /><PBook />Conserver cette requête SQL dans les signets</Legend>
        <MarkRow>
          <label>Intitulé :<Field /></label>
          <label><Check name="shared" />Signet visible pour les autres utilisateurs</label>
        </MarkRow>
        <MarkFoot><GreyButton $round>Conserver cette requête SQL dans les signets</GreyButton></MarkFoot>
      </Box>
      <Rule />
      <FootIcon href="#window" aria-label="Nouvelle fenêtre"><Art><rect x="1.5" y="2.5" width="12" height="12" fill="#fff" stroke="#8899bb" /><path d="M2 5h11" stroke="#4d7fcf" strokeWidth="2" /><path d="M9 2h6v5H9z" fill="#f6d860" /></Art></FootIcon>
    </Body>
    <ConsoleTab><Art w={14}><rect x=".5" y=".5" width="15" height="15" fill="#eee" stroke="#aaa" /><rect x="2.5" y="3" width="11" height="9" fill="#333" /></Art>Console de requêtes SQL</ConsoleTab>
  </Main>
);

const BrowserWindow = () => (
  <Browser>
    <TabStrip>
      {favs.map((f, i) => <FavTab key={i} aria-label={`Onglet ${i + 1}`}>{f}</FavTab>)}
      <ActiveTab aria-label="Fermer l’onglet"><X size={14} /></ActiveTab>
      <StripButton $w={44} $c="#87787c" aria-label="Nouvel onglet"><Plus size={16} strokeWidth={1.5} /></StripButton>
      <Spacer />
      <StripButton $w={34} aria-label="Liste"><ChevronDown size={16} /></StripButton>
      <StripButton $w={46} $c="#87787c" aria-label="Réduire"><Minus size={14} strokeWidth={1.5} /></StripButton>
      <StripButton $w={46} $c="#a39599" aria-label="Agrandir"><Art w={12} v="0 0 12 12"><path d="M1.500 1.500h9v9h-9z" stroke="#a39599" /></Art></StripButton>
      <StripButton $w={46} $c="#a39599" aria-label="Fermer"><X size={16} strokeWidth={1.5} /></StripButton>
    </TabStrip>
    <NavBar>
      <StripButton $w={30} aria-label="Retour"><ChevronLeft size={20} strokeWidth={1.8} /></StripButton>
      <StripButton $w={30} $c="#8d7278" aria-label="Avancer"><ChevronRight size={20} strokeWidth={1.8} /></StripButton>
      <StripButton $w={30} aria-label="Recharger"><RotateCw size={17} strokeWidth={1.8} /></StripButton>
      <Spacer $n={3} />
      <StripButton $w={30} aria-label="Signet"><Bookmark size={18} strokeWidth={1.5} /></StripButton>
      <UrlBox>
        <Art w={14}><circle cx="8" cy="8" r="8" fill="#e3d6d9" /><path d="M8 7v5M8 4v1.500" stroke="#3a1f26" strokeWidth="2" /></Art>
        <Url aria-label="Adresse" defaultValue="localhost/phpmyadmin/index.php?route=/sql&db=products-db&table=product&p..." />
        <UrlIcons>
          <Art><path d="M1 7v7.500h12V10M4 11c0-5 3-7 8-7M10 1l4 3-4 3.500" stroke="#e3d6d9" strokeWidth="1.2" /></Art>
          <UrlRule />
          <Art w={18} h={18} v="0 0 18 18"><path d="M4 1h10l2.500 3-2 9L9 17.500 3.500 13l-2-9z" fill="#fb542b" /><SiBrave x={4} y={4} size={10} color="#fff" /></Art>
          <Art w={28} h={22} v="0 0 28 22"><path d="M2 18L11 3l9 15z" fill="#9e1f63" /><path d="M2 18L11 3v10z" fill="#ff4724" /><path d="M2 18l9-5 9 5z" fill="#662d91" /><path d="M11 8l4 7H7z" fill="#fff" /><rect x="13" width="12" height="13" rx="4" fill="#fa4a2a" /><path d="M17.500 4.500l2-1V10" stroke="#fff" strokeWidth="1.2" /></Art>
        </UrlIcons>
      </UrlBox>
      <Spacer $n={2} />
      <StripButton $w={30} aria-label="Extensions"><Puzzle size={18} strokeWidth={1.7} /></StripButton>
      <StripButton $w={30} aria-label="Musique"><Music size={17} strokeWidth={1.7} /></StripButton>
      <StripButton $w={30} aria-label="Téléchargements"><Art><path d="M8 1v9M4.500 7L8 10.500 11.500 7M1.500 11v3.500h13V11" stroke="#efe6e8" strokeWidth="1.3" /></Art></StripButton>
      <StripButton $w={30} aria-label="Panneau"><Art><rect x="1" y="2" width="14" height="12" rx="1" stroke="#efe6e8" strokeWidth="1.3" /><path d="M10 2h5v12h-5z" fill="#efe6e8" /></Art></StripButton>
      <StripButton $w={30} aria-label="Portefeuille"><Wallet size={17} strokeWidth={1.7} /></StripButton>
      <StripButton $w={30} aria-label="Leo"><Art><path d="M7 1.500l1.500 4.500L13 7.500 8.500 9.200 7 14 5.500 9.200 1 7.500 5.500 6zM13 10.500v4M11 12.500h4" stroke="#efe6e8" strokeWidth="1.1" /></Art></StripButton>
      <StripButton $w={30} aria-label="VPN"><Art><path d="M8 .8l6.500 2v6c0 3-3 5-6.500 6.500C4.500 13.800 1.500 11.800 1.500 8.800v-6zM4.500 6.500c2-2 5-2 7 0M6 9c1.200-1.200 2.800-1.200 4 0M8 11v1" stroke="#efe6e8" strokeWidth="1.1" /></Art></StripButton>
      <StripButton $w={30} aria-label="Profil"><Art><defs><linearGradient id="pf" x2="1" y2="1"><stop stopColor="#f0468f" /><stop offset="1" stopColor="#4d5ff0" /></linearGradient></defs><circle cx="8" cy="8" r="8" fill="url(#pf)" /><path d="M1 9c5 1 9-2 12-6M6 4l8 8" stroke="#ffc9e6" strokeWidth="1.2" /></Art></StripButton>
      <StripButton $w={30} aria-label="Menu"><Menu size={20} strokeWidth={1.7} /></StripButton>
    </NavBar>
    <Page><Sidebar /><PmaMain /></Page>
  </Browser>
);

/* ---------- IDE ---------- */

const LINE = "#1e1f22";
const PANEL = "#2b2d30";
const FG = "#ced0d6";

const Ide = styled.section`
  position: relative;
  display: flex;
  flex-direction: column;
  min-width: 0;
  min-height: 0;
  border-left: 1px solid ${LINE};
  background: ${PANEL};
  box-shadow: 0 0 12px rgba(0, 0, 0, 0.35);
  font: 16px/20px ${INTER};
  color: #dfe1e5;
  white-space: nowrap;
`;
const Title = styled.header`
  display: flex;
  align-items: center;
  flex: none;
  height: 51px;
  padding: 0 2px 0 15px;
  border-bottom: 1px solid ${LINE};
  background: linear-gradient(90deg, ${PANEL} 20px, #573646 135px, ${PANEL} 400px);
`;
const BarButton = styled.button<{ $w?: number }>`
  display: flex;
  align-items: center;
  justify-content: center;
  flex: none;
  width: ${(p) => p.$w ?? 50}px;
  height: 38px;
`;
const MainMenu = styled(BarButton)`padding-left: 4px;`;
const Menuish = styled.button`
  display: flex;
  align-items: center;
  gap: 5px;
`;
const Project = styled(Menuish)`margin-right: 23px;`;
const Config = styled(Menuish)`margin-right: 16px;`;
const More = styled(BarButton)`margin-right: 17px;`;
const Cog = styled(BarButton)`margin-right: 4px;`;
const Badge = styled.span`
  display: flex;
  align-items: center;
  justify-content: center;
  width: 25px;
  height: 25px;
  margin-right: 2px;
  border-radius: 5px;
  background: linear-gradient(#c8518f, #a751cc);
  color: #fff;
`;
const ColorButton = styled.button<{ $bg: string }>`
  display: flex;
  align-items: center;
  justify-content: center;
  width: 38px;
  height: 38px;
  border-radius: 8px;
  background: ${(p) => p.$bg};
`;
const Work = styled.div`
  display: flex;
  flex: 1;
  min-height: 0;
`;
const Strip = styled.div<{ $right?: boolean }>`
  display: flex;
  flex-direction: column;
  flex: none;
  align-items: center;
  width: 51px;
  border: 0 solid ${LINE};
  border-width: ${(p) => (p.$right ? "0 0 0 1px" : "0 1px 0 0")};
`;
const Tool = styled.button<{ $on?: boolean }>`
  display: flex;
  align-items: center;
  justify-content: center;
  width: 38px;
  height: 38px;
  margin: 6px 0;
  border-radius: 8px;
  background: ${(p) => (p.$on ? "#4c4e53" : "none")};
`;
const StripRule = styled.i`
  width: 30px;
  height: 1px;
  margin: 7px 0 6px;
  background: #43454a;
`;
const Center = styled.div`
  display: flex;
  flex-direction: column;
  flex: 1;
  min-width: 0;
`;
const Upper = styled.div`
  display: flex;
  flex: 1;
  min-height: 0;
`;
const Panels = styled.div`
  display: flex;
  flex-direction: column;
  width: 455px;
  flex: none;
`;
const Panel = styled.div<{ $h?: number }>`
  position: relative;
  overflow: hidden;
  border-bottom: 1px solid ${LINE};
  ${(p) => (p.$h ? css`flex: none; height: ${p.$h}px; ul { margin-top: 4px; }` : css`flex: 1; min-height: 0;`)}
`;
const PanelHead = styled.div<{ $line?: boolean }>`
  display: flex;
  align-items: center;
  gap: 7px;
  height: 53px;
  padding-left: 15px;
  border-bottom: 1px solid ${(p) => (p.$line ? LINE : "transparent")};
  font-weight: 600;
`;
const Node = styled.li<{ $l: number; $sel?: boolean; $bg?: string }>`
  display: flex;
  align-items: center;
  height: 30px;
  padding-left: ${(p) => 14 + p.$l * 24}px;
  background: ${(p) => p.$bg ?? "none"};
  ${(p) => p.$sel && css`margin: 0 15px; padding-left: ${p.$l * 24 - 1}px; border-radius: 5px; background: #43454a;`}
`;
const Twisty = styled.span`
  width: 16px;
  margin-right: 9px;
`;
const NodeIcon = styled.span`
  width: 20px;
  margin-right: 4px;
`;
const Thumb = styled.i<{ $side: "tree" | "struct" | "run" }>`
  position: absolute;
  right: 0;
  width: 12px;
  background: rgba(128, 130, 136, 0.42);
  ${(p) => p.$side === "tree" && css`top: 183px; height: 329px;`}
  ${(p) => p.$side === "struct" && css`top: 54px; height: 50px;`}
  ${(p) => p.$side === "run" && css`right: 1px; bottom: 1px; height: 35px;`}
`;
const Editor = styled.div`
  display: flex;
  flex-direction: column;
  flex: 1;
  min-width: 0;
  position: relative;
  background: ${LINE};
`;
const EdTabs = styled.div`
  display: flex;
  align-items: center;
  flex: none;
  height: 52px;
  padding-right: 8px;
  border-bottom: 1px solid #393b40;
  overflow: hidden;
`;
const EdTab = styled.button<{ $on?: boolean; $pl: number; $pr: number }>`
  display: flex;
  align-items: center;
  gap: 7px;
  flex: none;
  height: 100%;
  min-width: ${(p) => (p.$on ? 245 : 0)}px;
  padding: 4px ${(p) => p.$pr}px 0 ${(p) => p.$pl}px;
  border-bottom: 4px solid ${(p) => (p.$on ? "#3574f0" : "transparent")};
  color: ${(p) => (p.$on ? "#dfe1e5" : "#b4b8bf")};
`;
const Lines = styled.ol`
  flex: 1;
  display: flex;
  flex-direction: column;
  margin: 0;
  padding: 1px 0 0;
  list-style: none;
  overflow: hidden;
  font: 16px/27px ${MONO};
  color: #7a7e85;
`;
const Line = styled.li<{ $on?: boolean; $fill?: boolean }>`
  display: flex;
  flex: ${(p) => (p.$fill ? "1" : "none")};
  height: 27px;
  background: ${(p) => (p.$on ? "#26282e" : "none")};
  white-space: pre;
  b { font-weight: 400; color: #6aab73; }
`;
const No = styled.span<{ $on?: boolean }>`
  width: 88px;
  flex: none;
  padding-right: 49px;
  border-right: 1px solid #313438;
  text-align: right;
  color: ${(p) => (p.$on ? "#a1a3ab" : "#4b5059")};
`;
const Code = styled.code`
  display: flex;
  align-items: center;
  padding-left: 3px;
  font: inherit;
`;
const Caret = styled.i`
  width: 3px;
  height: 22px;
  background: ${FG};
`;
const Inspect = styled.div`
  position: absolute;
  top: 50px;
  right: 8px;
  display: flex;
  align-items: center;
  gap: 4px;
`;
const HThumb = styled.i<{ $w: string }>`
  align-self: flex-end;
  width: ${(p) => p.$w};
  height: 12px;
  background: #464749;
`;
const OutThumb = styled(HThumb)`align-self: flex-start;`;
const EdThumbCell = styled.span`
  display: flex;
  flex: 1;
  padding: 0 0 1px 3px;
`;
const Run = styled.div`
  display: flex;
  flex-direction: column;
  flex: none;
  height: 260px;
  border-top: 1px solid ${LINE};
`;
const RunHead = styled.div`
  display: flex;
  height: 53px;
  flex: none;
  padding-left: 15px;
  border-bottom: 1px solid ${LINE};
  strong { align-self: center; margin-right: 20px; font-weight: 600; }
`;
const RunTab = styled.button`
  display: flex;
  align-items: center;
  gap: 5px;
  padding: 4px 1px 0 15px;
  border-bottom: 4px solid #5a5d63;
`;
const TabClose = styled.span`
  display: flex;
  justify-content: center;
  width: 32px;
`;
const RunTools = styled.div`
  display: flex;
  align-items: center;
  flex: none;
  height: 44px;
  padding-left: 11px;
  border-bottom: 1px solid ${LINE};
`;
const RunRule = styled.i`
  width: 1px;
  height: 24px;
  margin: 0 5px 0 4px;
  background: #43454a;
`;
const RunBody = styled.div`
  display: flex;
  flex: 1;
  min-height: 0;
`;
const RunSide = styled.div`
  display: flex;
  flex-direction: column;
  align-items: center;
  width: 48px;
  padding: 7px 0 0;
  button { height: 34px; width: 34px; display: flex; align-items: center; justify-content: center; }
  button:last-child { margin-top: 19px; }
`;
const Output = styled.div`
  position: relative;
  display: flex;
  flex-direction: column;
  flex: 1;
  min-width: 0;
  padding: 0 0 1px 18px;
  background: ${LINE};
  font: 16px/27px ${MONO};
  color: #bcbec4;
  overflow: hidden;
`;
const OutputLines = styled.div`
  display: flex;
  flex-direction: column;
  justify-content: flex-end;
  height: 119px;
  overflow: hidden;
`;
const LogLine = styled.div`
  display: grid;
  flex: none;
  grid-template-columns: 310px 50px 61px 40px 119px 60px 414px 16px auto;
  height: 27px;
  white-space: pre;
  u { text-decoration: underline dotted #8a8c91; text-underline-offset: 4px; }
`;
const Status = styled.footer`
  display: flex;
  align-items: center;
  flex: none;
  height: 38px;
  padding: 0 20px 2px 18px;
  border-top: 1px solid ${LINE};
  color: #9da0a8;
  gap: 6px;
`;
const Stat = styled.span<{ $dim?: boolean }>`
  margin-right: 14px;
  color: ${(p) => (p.$dim ? "#5f6269" : "inherit")};
`;

const Letter = ({ c, bg, t }: { c: string; bg: string; t: "C" | "I" | "p" }) => (
  <Art w={20}>
    <circle cx="8" cy="8" r="6.5" fill={bg} stroke={c} />
    {t === "C" && <path d="M10.3 6.300a2.800 2.800 0 1 0 0 3.400" stroke={c} strokeWidth="1.1" />}
    {t === "I" && <path d="M6 5h4M6 11h4M8 5v6" stroke={c} strokeWidth="1.1" />}
    {t === "p" && <path d="M6.500 12V5.500h1.800a2 2 0 0 1 0 4.200H6.500" stroke={c} strokeWidth="1.1" />}
  </Art>
);
const Clazz = () => <Letter c="#548af7" bg="#25324d" t="C" />;
const Dir = ({ c = FG, bg = "#43454a", mark }: { c?: string; bg?: string; mark?: "pkg" | "res" }) => (
  <Art w={20}>
    <path d="M1.500 12V3.500c0-.8.500-1.300 1.300-1.300h3.300l2 2.100h5c.8 0 1.400.6 1.400 1.400V12c0 .8-.6 1.400-1.400 1.400H2.900c-.8 0-1.400-.6-1.400-1.400z" fill={bg} stroke={c} />
    {mark === "pkg" && <circle cx="7" cy="9" r="1.7" stroke={c} />}
    {mark === "res" && <><path d="M8.500 9h8v7h-8z" fill={PANEL} /><path d="M9.500 10.300h6M9.500 12.500h6M9.500 14.700h6" stroke="#d6ae58" /></>}
  </Art>
);
const AppIcon = ({ s = 20 }: { s?: number }) => (
  <Art w={s} v="0 0 20 20"><rect x="1.5" y="2.5" width="16" height="15" rx="2.5" fill="#25324d" stroke="#548af7" strokeWidth="1.2" /><path d="M4.500 6h2M8.500 6h2" stroke="#548af7" /><circle cx="16" cy="4" r="4" fill="#5fad65" /></Art>
);
const Rerun = ({ c, s = 20, play }: { c: string; s?: number; play: string }) => (
  <Art w={s} v="0 0 20 20"><path d="M8 16.500A6.700 6.700 0 1 1 15 6M15.500 1v5h-5" stroke={c} strokeWidth="1.4" /><path d="M11.500 10v8.500l6.500-4.200z" stroke={play} strokeWidth="1.3" strokeLinejoin="round" /></Art>
);
const IgnoreIcon = () => <Art w={20}><circle cx="8" cy="8" r="6.5" fill="#43454a" stroke={FG} /><path d="M3.500 12.500l9-9" stroke={FG} /></Art>;
const Maven = ({ c = "#548af7", s = 20 }: { c?: string; s?: number }) => (
  <Art w={s}><path d="M1.500 13.500L3.500 3M3.200 6C5 2.800 8.600 2.600 8.200 5.800L6.800 13.500M8.100 6C10 2.800 14 2.600 13.600 5.800L12.200 13.500" stroke={c} strokeWidth="1.6" /></Art>
);
const LibIcon = () => <Art w={20}><path d="M1.500 4.500h4v9h-4zM5.500 2.500h4v11h-4zM9.500 6.500h4v7h-4z" fill="#43454a" stroke={FG} /></Art>;
const ScratchIcon = () => <Art w={20}><path d="M1.500 3.500h6M1.500 6.500h7M1.500 9.500h12M1.500 12.500h9" stroke={FG} /><circle cx="12" cy="4.5" r="3.8" fill="#548af7" /><path d="M12 2.500v2.300l1.300 1" stroke="#1e1f22" /></Art>;
const Prop = () => <Settings size={20} strokeWidth={1.4} color={FG} />;
const PropP = () => <Letter c="#b589ec" bg="#2f2936" t="p" />;
const Down = ({ s = 17 }: { s?: number }) => <ChevronDown size={s} strokeWidth={1.6} color={FG} />;
const Right = () => <ChevronRight size={17} strokeWidth={1.6} color={FG} />;

type Item = { l: number; t: string; i: React.ReactNode; open?: boolean; shut?: boolean; sel?: boolean; bg?: string };
const tree: Item[] = [
  { l: 5, t: "entities", i: <Dir mark="pkg" />, open: true },
  { l: 6, t: "Product", i: <Clazz /> },
  { l: 5, t: "repository", i: <Dir mark="pkg" />, open: true },
  { l: 6, t: "ProductRepository", i: <Letter c="#57965c" bg="#253627" t="I" /> },
  { l: 5, t: "Main", i: <Art w={20}><circle cx="8" cy="8.5" r="6.5" fill="#25324d" stroke="#548af7" /><path d="M10 7a2.800 2.800 0 1 0 .2 3.400" stroke="#548af7" /><path d="M10 0v7.500L15.500 4z" fill="#253627" stroke="#57965c" /></Art> },
  { l: 3, t: "resources", i: <Dir mark="res" />, open: true },
  { l: 4, t: "static", i: <Dir /> },
  { l: 4, t: "templates", i: <Dir /> },
  { l: 4, t: "application.properties", i: <Prop />, sel: true },
  { l: 2, t: "test", i: <Dir />, shut: true },
  { l: 1, t: "target", i: <Dir c="#c77d55" bg="#45322b" />, shut: true, bg: "#3d3223" },
  { l: 1, t: ".gitignore", i: <IgnoreIcon /> },
  { l: 1, t: "pom.xml", i: <Maven /> },
  { l: 0, t: "External Libraries", i: <LibIcon />, shut: true },
  { l: 0, t: "Scratches and Consoles", i: <ScratchIcon /> },
];
const outline: Item[] = [
  { l: 0, t: "application.properties", i: <Prop />, open: true },
  { l: 1, t: "server.port", i: <PropP /> },
  { l: 1, t: "spring.datasource.url", i: <PropP /> },
  { l: 1, t: "spring.datasource.username", i: <PropP /> },
];
const Tree = ({ items }: { items: Item[] }) => (
  <ul>
    {items.map((n) => (
      <Node key={n.t} $l={n.l} $sel={n.sel} $bg={n.bg}>
        <Twisty>{n.open ? <Down /> : n.shut ? <Right /> : null}</Twisty>
        <NodeIcon>{n.i}</NodeIcon>{n.t}
      </Node>
    ))}
  </ul>
);

const source: [string, string?][] = [
  ["server.port=", "8085"], [""], [""],
  ["spring.datasource.url=", "jdbc:mysql://localhost:3306/products-db?c"],
  ["spring.datasource.username=", "root"],
  ["spring.datasource.password="],
  ["spring.jpa.hibernate.ddl-auto=", "update"],
  ["spring.jpa.properties.hibernate.dialect=", "org.hibernate.dialect.M"],
  [""], [""], [""],
  ["#spring.datasource.url=jdbc:h2:mem:products-db"],
  ["#spring.h2.console.enabled=true"],
];
const log: [string, string, string, string, string][] = [
  ["14.666", "INFO", "o.h.e.t.j.p.i.", "JtaPlatformInitiator", "HHH0"],
  ["14.700", "INFO", "j.LocalContainerEntityManagerFactoryBean", "", "Init"],
  ["14.851", "WARN", "JpaBaseConfiguration$JpaWebConfiguration", "", "spri"],
  ["15.108", "INFO", "o.s.b.w.embedded.tomcat.", "TomcatWebServer", "Tomc"],
  ["15.114", "INFO", "ma.emsi.tanjiothmane.demo.", "Main", "Star"],
];

const IdeWindow = () => (
  <Ide>
    <Title>
      <Idea s={20} />
      <MainMenu $w={82} aria-label="Menu principal"><Art w={20} v="0 0 20 20"><path d="M0 1h20M0 7h20M0 13h20M0 19h20" stroke={FG} strokeWidth="1.5" /></Art></MainMenu>
      <Project><Badge>ST</Badge>springboot.tp2.tanjiothmane<Down /></Project>
      <Menuish>Version control<Down /></Menuish>
      <Spacer />
      <Config><AppIcon s={24} />Main<Down /></Config>
      <ColorButton $bg="#57965c" aria-label="Relancer"><Rerun c="#fff" play="#fff" s={24} /></ColorButton>
      <BarButton aria-label="Déboguer"><Bug size={23} strokeWidth={1.7} color="#5fad65" /></BarButton>
      <ColorButton $bg="#c94f4f" aria-label="Arrêter"><Square size={23} strokeWidth={1.8} color="#fff" /></ColorButton>
      <More aria-label="Plus"><EllipsisVertical size={24} color={FG} /></More>
      <BarButton aria-label="Collaborer"><UserRoundPlus size={24} strokeWidth={1.7} color={FG} /></BarButton>
      <BarButton aria-label="Rechercher"><Search size={24} strokeWidth={1.7} color={FG} /></BarButton>
      <Cog aria-label="Paramètres">
        <Art w={26} v="0 0 26 26"><Settings x={1} y={1} size={24} strokeWidth={1.6} color={FG} /><circle cx="20" cy="5" r="5" fill="#f2c55c" /></Art>
      </Cog>
      <BarButton $w={47} aria-label="Réduire"><Minus size={15} strokeWidth={1.5} color="#fff" /></BarButton>
      <BarButton $w={47} aria-label="Agrandir"><Art w={12} v="0 0 12 12"><path d="M1.500 1.500h9v9h-9z" stroke="#fff" /></Art></BarButton>
      <BarButton $w={47} aria-label="Fermer"><X size={17} strokeWidth={1.3} color="#fff" /></BarButton>
    </Title>
    <Work>
      <Strip>
        <Tool $on aria-label="Project"><Folder size={25} strokeWidth={1.5} color={FG} /></Tool>
        <StripRule />
        <Tool $on aria-label="Structure"><Art w={24} v="0 0 20 20"><rect x="1.5" y="1" width="6.5" height="6.5" rx="1.5" stroke={FG} strokeWidth="1.4" /><rect x="1.5" y="11" width="6.5" height="6.5" rx="1.5" stroke={FG} strokeWidth="1.4" /><rect x="11.5" y="11" width="6.5" height="6.5" rx="1.5" stroke={FG} strokeWidth="1.4" /></Art></Tool>
        <Tool aria-label="Plus"><Ellipsis size={26} color={FG} /></Tool>
        <Spacer />
        <Tool aria-label="Services"><Art w={26} v="0 0 24 24"><path d="M7 2.500h10L22.500 12 17 21.500H7L1.500 12z" stroke={FG} strokeWidth="1.4" strokeLinejoin="round" /><path d="M9.500 7.500v9l7-4.500z" stroke={FG} strokeWidth="1.4" strokeLinejoin="round" /></Art></Tool>
        <Tool aria-label="Build"><Art w={25} v="0 0 24 24"><path d="M1.500 2h13c4 0 7 2.500 8 6.500-2-1.500-4-2-6.500-2L14 8h-4L8.500 6.500h-7zM10 8v14.500h4V8" stroke={FG} strokeWidth="1.4" strokeLinejoin="round" /></Art></Tool>
        <Tool $on aria-label="Run"><Art w={26} v="0 0 26 26"><path d="M4.500 3v21l16.500-10.500z" stroke={FG} strokeWidth="1.6" strokeLinejoin="round" /><circle cx="21" cy="5" r="4.3" fill="#5fad65" /></Art></Tool>
        <Tool aria-label="Debug"><Bug size={26} strokeWidth={1.5} color={FG} /></Tool>
        <Tool aria-label="Find"><Search size={25} strokeWidth={1.5} color={FG} /></Tool>
        <Tool aria-label="Terminal"><Art w={24}><rect x=".8" y="1.3" width="14.4" height="13.4" rx="1.5" stroke={FG} /><path d="M4 5l2.500 2.300L4 9.600M8 11h4" stroke={FG} /></Art></Tool>
        <Tool aria-label="Problems"><CircleAlert size={27} strokeWidth={1.5} color={FG} /></Tool>
        <Tool aria-label="Git"><Art w={24} v="0 0 20 20"><circle cx="5" cy="3.5" r="2.6" stroke={FG} strokeWidth="1.3" /><circle cx="15" cy="5" r="2.6" stroke={FG} strokeWidth="1.3" /><path d="M5 6v13.500M5 14.500h5c3 0 5-2 5-4.500V7.500" stroke={FG} strokeWidth="1.3" /></Art></Tool>
      </Strip>
      <Center>
        <Upper>
          <Panels>
            <Panel><PanelHead $line>Project<Down /></PanelHead><Tree items={tree} /><Thumb $side="tree" /></Panel>
            <Panel $h={167}><PanelHead>Structure</PanelHead><Tree items={outline} /><Thumb $side="struct" /></Panel>
          </Panels>
          <Editor>
            <EdTabs>
              <EdTab $pl={4} $pr={54}>ProductRepository.java</EdTab>
              <EdTab $pl={0} $pr={39}><Clazz />Product.java</EdTab>
              <EdTab $on $pl={15} $pr={11}><Prop />application.properties<Spacer /><X size={17} strokeWidth={1.3} color="#868a91" /></EdTab>
              <Spacer />
              <BarButton $w={34} aria-label="Onglets"><Down s={20} /></BarButton>
              <BarButton $w={34} aria-label="Options"><EllipsisVertical size={20} color={FG} /></BarButton>
            </EdTabs>
            <Lines>
              {source.map(([k, v], i) => (
                <Line key={i} $on={i === 6}>
                  <No $on={i === 6}>{i + 1}</No>
                  <Code>{k}<b>{v}</b>{i === 6 && <Caret />}</Code>
                </Line>
              ))}
              <Line $fill><No /><EdThumbCell><HThumb $w="63%" /></EdThumbCell></Line>
            </Lines>
            <Inspect>
              <Art><path d="M8 1.500L15 14.500H1z" fill="#c29e4a" stroke="#c29e4a" strokeLinejoin="round" /><path d="M8 5.500v5M8 12v1.500" stroke={LINE} strokeWidth="1.6" /></Art>
              <span>6</span>
              <BarButton $w={24} aria-label="Précédent"><ChevronUp size={17} strokeWidth={1.3} color={FG} /></BarButton>
              <BarButton $w={20} aria-label="Suivant"><ChevronDown size={17} strokeWidth={1.3} color={FG} /></BarButton>
            </Inspect>
          </Editor>
        </Upper>
        <Run>
          <RunHead>
            <strong>Run</strong>
            <RunTab><AppIcon />Main<TabClose><X size={16} strokeWidth={1.3} color="#868a91" /></TabClose></RunTab>
          </RunHead>
          <RunTools>
            <BarButton $w={34} aria-label="Relancer"><Rerun c={FG} play="#57965c" /></BarButton>
            <BarButton $w={34} aria-label="Arrêter"><Art w={18} v="0 0 18 18"><rect x="1.5" y="1.5" width="15" height="15" rx="2" fill="#5e3838" stroke="#db5c5c" /></Art></BarButton>
            <RunRule />
            <BarButton $w={35} aria-label="Capture"><Camera size={21} strokeWidth={1.3} color={FG} /></BarButton>
            <BarButton $w={35} aria-label="Quitter"><Art w={20} v="0 0 20 20"><path d="M5 5V3c0-1 .5-1.500 1.500-1.500h9c1 0 1.500.5 1.500 1.500v14c0 1-.5 1.500-1.500 1.500h-9c-1 0-1.500-.5-1.500-1.500v-2" stroke={FG} strokeWidth="1.2" /><path d="M1 10h11M9 6.500l3.500 3.500L9 13.500" stroke="#db5c5c" strokeWidth="1.3" /></Art></BarButton>
            <BarButton $w={32} aria-label="Plus"><EllipsisVertical size={20} color={FG} /></BarButton>
          </RunTools>
          <RunBody>
            <RunSide>
              <button aria-label="Haut"><ArrowUp size={20} strokeWidth={1.4} color={FG} /></button>
              <button aria-label="Bas"><ArrowDown size={20} strokeWidth={1.4} color={FG} /></button>
              <button aria-label="Retour à la ligne"><Art w={20}><path d="M1 2.500h14M1 7.500h11.500c3 0 3 4.500 0 4.500H9M11 9.500L8.500 12l2.500 2.500M1 12h4" stroke={FG} /></Art></button>
              <button aria-label="Afficher plus"><ChevronRight size={18} strokeWidth={1.4} color={FG} /></button>
            </RunSide>
            <Output>
              <OutputLines>
                {log.map(([t, lvl, pre, cls, msg]) => (
                  <LogLine key={t}>
                    <span>2025-03-25T00:10:{t}+01:00</span><span>{lvl}</span><span>18868</span><span>---</span><span>[</span>
                    <span>main]</span><span>{pre}<u>{cls}</u></span><span>:</span><span>{msg}</span>
                  </LogLine>
                ))}
              </OutputLines>
              <Spacer />
              <OutThumb $w="337px" />
              <Thumb $side="run" />
            </Output>
          </RunBody>
        </Run>
      </Center>
      <Strip $right>
        <Tool aria-label="Notifications"><Art w={26} v="0 0 26 26"><Bell x={1} y={2} size={24} strokeWidth={1.5} color={FG} /><circle cx="21" cy="5" r="4.3" fill="#db5c5c" /></Art></Tool>
        <Tool aria-label="AI"><Art w={24} v="0 0 24 24"><path d="M4 4c7-4 17-1 17 7 0 7-8 9-11.500 5.500C6.500 13 8.500 8 12.500 9c2.500.700 2.500 4 .5 5M20 19.500C13 24 3 20 3 12 3 5.500 11 3 15 6.500c3.500 3.500 1.500 9-3 9-3 0-4.500-4-1.500-5.500" stroke={FG} strokeWidth="1.5" /></Art></Tool>
        <Tool aria-label="Maven"><Maven c={FG} s={26} /></Tool>
      </Strip>
    </Work>
    <Status>
      <Art w={12} v="0 0 12 12"><rect x="1" y="1" width="9" height="10" rx="2" fill="#25324d" stroke="#548af7" strokeWidth="1.4" /></Art>
      <span>springboot.tp2.tanjiothmane</span><Right />
      <span>src</span><Right /><span>main</span><Right /><span>resources</span><Right />
      <Prop /><span>application.properties</span>
      <Spacer />
      <Stat>7:37</Stat><Stat>CRLF</Stat><Stat $dim>ISO-8859-1</Stat><Stat>4 spaces</Stat>
      <LockOpen size={22} strokeWidth={1.4} color={FG} />
    </Status>
  </Ide>
);

/* ---------- taskbar ---------- */

const Bar = styled.footer`
  display: flex;
  align-items: center;
  flex: none;
  height: 40px;
  background: linear-gradient(90deg, #2a2826, #3a2724 15%, #2f2d2a 20%, #32302c 40%, #302e2b 52%, #3f3e3c 58%, #434140 66%, #302e2a 76%, #33312e 90%, #444);
  color: #fff;
  font: 13px/18px ${SEGOE};
`;
const Start = styled.button`
  display: flex;
  align-items: center;
  justify-content: center;
  width: 48px;
  height: 40px;
`;
const Find = styled.label`
  display: flex;
  align-items: center;
  gap: 12px;
  width: 288px;
  height: 40px;
  padding-left: 11px;
  border: 1px solid #555;
  background: #323130;
  input { flex: 1; min-width: 0; border: 0; outline: 0; background: none; padding: 0; font-size: 14px; }
  input::placeholder { color: #d4d3d2; }
`;
const TaskApp = styled.button<{ $on?: boolean; $idle?: boolean }>`
  display: flex;
  align-items: center;
  justify-content: center;
  width: ${(p) => (p.$idle ? 50 : 48)}px;
  height: 40px;
  margin-right: ${(p) => (p.$idle ? 0 : 1)}px;
  background: ${(p) => (p.$on ? "#595755" : "none")};
  background-image: ${(p) => (p.$idle ? "none" : "linear-gradient(#76b9ed, #76b9ed)")};
  background-repeat: no-repeat;
  background-position: bottom center;
  background-size: ${(p) => (p.$on ? 48 : 40)}px 2px;
`;
const Weather = styled.button`
  display: flex;
  align-items: center;
  gap: 8px;
  margin-right: 18px;
`;
const Tray = styled.button`
  display: flex;
  justify-content: center;
  width: 24px;
`;
const Clock = styled.button`
  width: 70px;
  font-size: 11px;
  text-align: center;
`;
const Notif = styled.button`
  width: 46px;
  display: flex;
  justify-content: center;
`;
const ShowDesktop = styled.button`
  width: 5px;
  height: 40px;
  border-left: 1px solid #8a8a8a;
`;

const Taskbar = () => (
  <Bar>
    <Start aria-label="Démarrer"><Art><path d="M0 2.300L6.500 1.400v6.100H0zM7.300 1.300L16 0v7.500H7.300zM0 8.400h6.500v6.200L0 13.700zM7.300 8.400H16V16l-8.700-1.200z" fill="#fff" /></Art></Start>
    <Find>
      <Art w={17}><circle cx="10" cy="6" r="5" stroke="#fff" strokeWidth="1.2" /><path d="M6.500 9.500L1 15" stroke="#fff" strokeWidth="1.2" /></Art>
      <input aria-label="Rechercher" placeholder="Taper ici pour rechercher" />
    </Find>
    <TaskApp $idle aria-label="Vue des tâches"><Art w={18}><path d="M1 1v2h9V1M1 15v-2h9v2M1 5.500h9v5H1zM13.500 1v2M13.500 9v6" stroke="#fff" /><rect x="12" y="5" width="3" height="3" fill="#fff" /></Art></TaskApp>
    <TaskApp aria-label="VS"><Art w={24} v="0 0 24 24"><path d="M1 2.500h5v12l4 3v5l-9-6z" fill="#0f7388" /><path d="M10 2.500v15" stroke="#12798f" strokeWidth="2" /><path d="M23 14h-7v4h5.500v4H14" stroke="#12798f" strokeWidth="3" /><path d="M15 9V5.500L17.500 3H22v6.500h-7z" stroke="#f39a1d" strokeWidth="2.800" /></Art></TaskApp>
    <TaskApp aria-label="Alimentation"><Art w={24} v="0 0 24 24"><path d="M12 1l9.500 5.500v11L12 23l-9.500-5.500v-11z" fill="#111" stroke="#ddd" /><path d="M12 4l6.500 4v4" stroke="#f2c230" strokeWidth="2" /><path d="M18.500 12v4L12 20" stroke="#e34db8" strokeWidth="2" /><path d="M12 20l-6.500-4v-4" stroke="#2bb5f0" strokeWidth="2" /><path d="M5.500 12V8L12 4" stroke="#51cf4c" strokeWidth="2" /><path d="M9.500 10a4 4 0 1 0 5 0M12 8v5" stroke="#fff" strokeWidth="1.5" /></Art></TaskApp>
    <TaskApp aria-label="Brave"><Art w={26} v="0 0 26 26"><path d="M5 1h11l4 4-2 11-7 8-7-8L2 5z" fill="#fb542b" /><SiBrave x={5} y={4} size={12} color="#fff" /><circle cx="18" cy="18" r="7" fill="#9a4fd6" /><path d="M12 20c4 0 8-3 11-6M15 13l6 9" stroke="#ffc9e6" strokeWidth="1.2" /></Art></TaskApp>
    <TaskApp aria-label="Outils x64"><Art w={24} v="0 0 24 24"><rect y="6" width="24" height="18" fill="#3c3f45" /><path d="M23 5h-6c-4 0-4 5-6 9s-6 4-7 9h7c1-5 4-5 6-9 1-3 2-3 6-3z" fill="#f7b24a" /><path d="M4 9h9l-4 5z" fill="#d4552b" /><rect width="13" height="8" fill="#eee" /><path d="M1 2l3 5M4 2L1 7M8.500 3H6v3h2.500V4.500H6M10 2v3h2M12 1v6" stroke="#333" /></Art></TaskApp>
    <TaskApp $on aria-label="IntelliJ IDEA"><Idea s={24} /></TaskApp>
    <TaskApp aria-label="Explorateur"><Art w={24} v="0 0 24 24"><path d="M1 3h8l2 2h12v3H1z" fill="#d99a17" /><path d="M1 6h22v15H1z" fill="#ffd75e" /><path d="M5 22v-8h14v8h-4v-4H9v4z" fill="#3f97db" /></Art></TaskApp>
    <TaskApp aria-label="XAMPP"><Art w={24} v="0 0 24 24"><rect width="24" height="24" rx="4" fill="#fb7a24" /><SiXampp x={3} y={3} size={18} color="#fff" /></Art></TaskApp>
    <Spacer />
    <Weather>
      <Art w={26} v="0 0 26 26"><path d="M10 1c6 3 6 9 3 12L2 12c5 0 9-5 8-11z" fill="#f5a524" /><path d="M5 24a5 5 0 0 1 0-9c1-6 10-7 12-1 6-2 9 8 3 10z" fill="#8fb6f5" /><path d="M6 17c2-5 8-5 10-1" stroke="#c4dafc" strokeWidth="3" /></Art>
      <span>11°C&nbsp;&nbsp;Ciel couvert</span>
    </Weather>
    <Tray aria-label="Icônes cachées"><ChevronUp size={18} strokeWidth={1.5} /></Tray>
    <Tray aria-label="Réseau"><Art w={17}><path d="M4 3h11v8H4M9 11v3M6 14.500h7M1 2h4v3.500H1zM3 5.500V13" stroke="#fff" /></Art></Tray>
    <Tray aria-label="Volume"><Art w={17}><path d="M1 6h2.500L7 2.500v11L3.500 10H1zM9 6c1.200 1 1.200 3 0 4M11 4c2.500 2 2.500 6 0 8M13 2.500c3.500 3 3.500 8 0 11" stroke="#fff" /></Art></Tray>
    <Clock>00:11<br />25/03/2025</Clock>
    <Notif aria-label="Notifications"><Art w={28} v="0 0 28 28"><path d="M3 3h16v13h-6l-4 4v-4H3z" fill="#fff" /><path d="M6 7h10M6 10h10M6 13h6" stroke="#333" /><circle cx="19" cy="19" r="7.5" fill="#3a3937" stroke="#aaa" /><path d="M17 16.500l2.500-1.500v8" stroke="#fff" strokeWidth="1.6" /></Art></Notif>
    <ShowDesktop aria-label="Bureau" />
  </Bar>
);

export default function App() {
  return (
    <Desktop>
      <Global />
      <Windows><BrowserWindow /><IdeWindow /></Windows>
      <Taskbar />
    </Desktop>
  );
}
